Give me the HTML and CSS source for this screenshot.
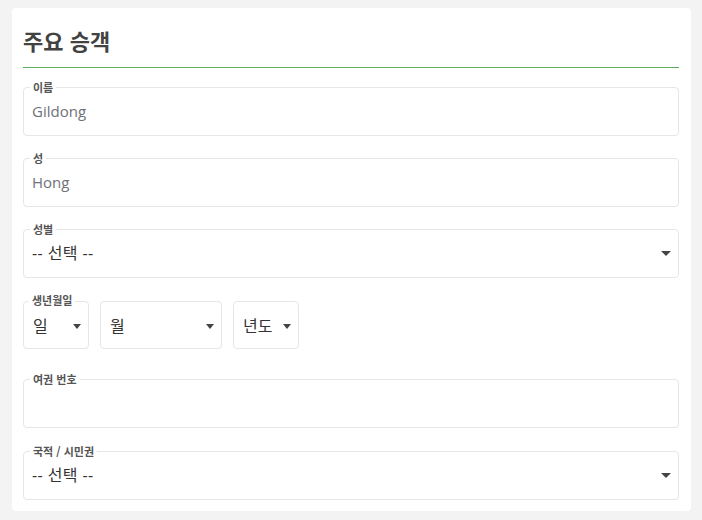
FILE: index.html
```html
<!DOCTYPE html>
<html lang="ko">
<head>
<meta charset="utf-8">
<title>주요 승객</title>
<link rel="stylesheet" href="styles.css">
</head>
<body>
<main class="card">
  <h2 class="title">주요 승객</h2>
  <form class="form">
    <fieldset class="field">
      <legend>이름</legend>
      <div class="value muted">Gildong</div>
    </fieldset>
    <fieldset class="field">
      <legend>성</legend>
      <div class="value muted">Hong</div>
    </fieldset>
    <fieldset class="field">
      <legend>성별</legend>
      <div class="value select">
        <span>-- 선택 --</span>
        <span class="caret"></span>
      </div>
    </fieldset>
    <div class="date-group">
      <span class="date-label">생년월일</span>
      <div class="date-row">
        <div class="box box-day"><span>일</span><span class="caret small"></span></div>
        <div class="box box-month"><span>월</span><span class="caret small"></span></div>
        <div class="box box-year"><span>년도</span><span class="caret small"></span></div>
      </div>
    </div>
    <fieldset class="field field-passport">
      <legend>여권 번호</legend>
      <div class="value"></div>
    </fieldset>
    <fieldset class="field">
      <legend>국적 / 시민권</legend>
      <div class="value select">
        <span>-- 선택 --</span>
        <span class="caret"></span>
      </div>
    </fieldset>
  </form>
</main>
</body>
</html>
```
FILE: styles.css
```css
* { box-sizing: border-box; }

html, body {
  margin: 0;
  background: #f3f3f3;
}

body {
  padding: 8px 11px 9px 12px;
  font-family: "Open Sans", "Noto Sans CJK KR", sans-serif;
  color: #333;
}

.card {
  background: #fff;
  border-radius: 4px;
  padding: 0 12px 11px 11px;
}

.title {
  margin: 0;
  height: 60px;
  padding-top: 17px;
  font-family: "Noto Sans CJK KR", sans-serif;
  font-size: 22px;
  line-height: 30px;
  font-weight: 700;
  color: #424242;
  border-bottom: 1px solid #5cae5c;
}

.form {
  display: flex;
  flex-direction: column;
  padding-top: 13px;
}

.field {
  margin: 0 0 16px;
  padding: 0 8px 0 8px;
  border: 1px solid #e6e6e6;
  border-radius: 4px;
  min-width: 0;
}

.field:last-child { margin-bottom: 0; }
.field-passport { margin-bottom: 17px; }

.field legend,
.date-label {
  font-family: "Noto Sans CJK KR", sans-serif;
  font-size: 11px;
  line-height: 12px;
  font-weight: 700;
  color: #555;
  padding: 0 3px;
  margin-left: -2px;
}

.value {
  height: 42px;
  padding-bottom: 7px;
  display: flex;
  align-items: center;
  font-size: 15px;
  line-height: 20px;
}

.muted { color: #6e7178; }

.select {
  justify-content: space-between;
  font-family: "Open Sans", "Noto Sans CJK KR", sans-serif;
  font-size: 16px;
  letter-spacing: 0.4px;
  color: #333;
}

.caret {
  width: 0;
  height: 0;
  border-left: 5px solid transparent;
  border-right: 5px solid transparent;
  border-top: 5px solid #444;
  margin-right: -1px;
  margin-top: 2px;
}

.caret.small {
  border-left-width: 4.5px;
  border-right-width: 4.5px;
}

.date-group {
  display: flex;
  flex-direction: column;
  margin-bottom: 24px;
}

.date-label {
  align-self: flex-start;
  margin-left: 6px;
  margin-bottom: -5px;
  background: #fff;
  position: relative;
  z-index: 1;
}

.date-row {
  display: flex;
  gap: 11px;
}

.box {
  height: 48px;
  border: 1px solid #e6e6e6;
  border-radius: 4px;
  display: flex;
  align-items: center;
  justify-content: space-between;
  padding: 0 8px 0 9px;
  font-family: "Noto Sans CJK KR", sans-serif;
  font-size: 16px;
  color: #333;
}

.box-day { width: 66px; }
.box-month { width: 122px; }
.box-year { width: 66px; }
```
